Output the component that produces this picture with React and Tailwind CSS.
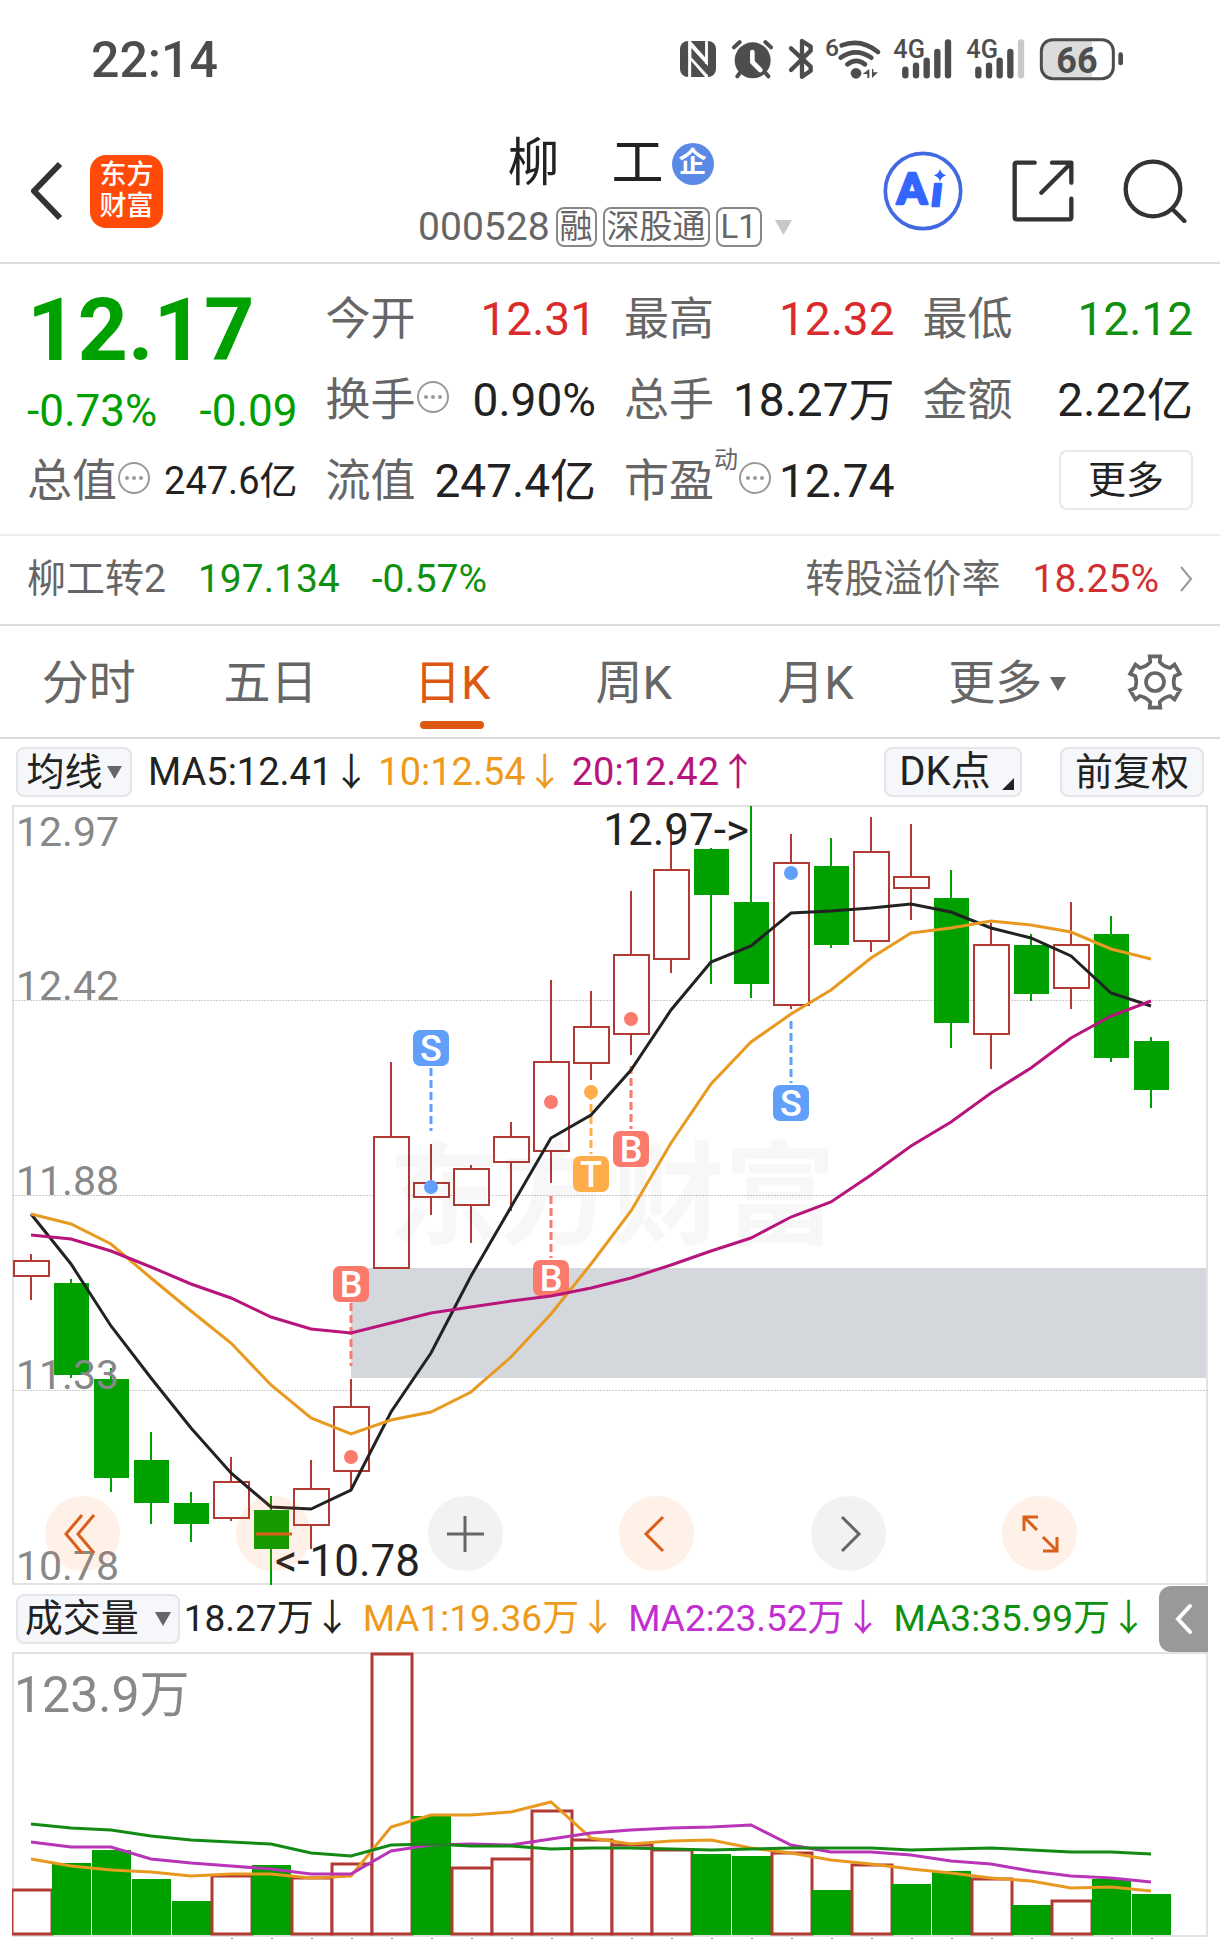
import React from 'react'

const RED = '#b23a35'
const GREEN = '#00a000'

// shared x position of the n-th trading day
const dayX = (i) => 31 + i * 40
const toPoints = (ys) => ys.map((y, i) => `${dayX(i)},${y}`).join(' ')

// [direction, high, bodyTop, bodyBottom, low]
const candles = [
    ['up', 1254, 1261, 1276, 1300],
    ['down', 1279, 1283, 1375, 1378],
    ['down', 1368, 1379, 1478, 1492],
    ['down', 1432, 1460, 1503, 1524],
    ['down', 1492, 1503, 1524, 1542],
    ['up', 1457, 1482, 1518, 1521],
    ['down', 1496, 1510, 1549, 1585],
    ['up', 1460, 1489, 1525, 1549],
    ['up', 1379, 1407, 1471, 1489],
    ['up', 1062, 1137, 1268, 1268],
    ['up', 1144, 1183, 1197, 1215],
    ['up', 1165, 1169, 1205, 1243],
    ['up', 1122, 1137, 1162, 1211],
    ['up', 980, 1062, 1151, 1183],
    ['up', 991, 1027, 1063, 1080],
    ['up', 891, 955, 1034, 1055],
    ['up', 824, 870, 959, 973],
    ['down', 848, 849, 895, 984],
    ['down', 806, 902, 984, 998],
    ['up', 834, 863, 1005, 1009],
    ['down', 838, 866, 945, 948],
    ['up', 817, 852, 941, 952],
    ['up', 824, 877, 888, 920],
    ['down', 870, 898, 1023, 1048],
    ['up', 923, 945, 1034, 1069],
    ['down', 934, 945, 994, 1001],
    ['up', 902, 945, 988, 1009],
    ['down', 916, 934, 1058, 1062],
    ['down', 1037, 1041, 1090, 1108],
]

const ma5 = [1214, 1264, 1326, 1378, 1428, 1473, 1507, 1509, 1490, 1412, 1353, 1276, 1207, 1138, 1115, 1070, 1010, 962, 946, 913, 911, 908, 904, 912, 928, 938, 956, 993, 1006]
const ma10 = [1214, 1224, 1244, 1278, 1311, 1343, 1385, 1418, 1434, 1420, 1412, 1392, 1357, 1314, 1264, 1211, 1143, 1084, 1042, 1014, 990, 958, 933, 928, 921, 925, 932, 949, 959]
const ma20 = [1235, 1239, 1251, 1267, 1284, 1298, 1317, 1329, 1333, 1323, 1313, 1307, 1301, 1296, 1288, 1278, 1265, 1251, 1238, 1217, 1202, 1175, 1146, 1122, 1093, 1068, 1038, 1016, 1001]

const volumeTops = [1890, 1863, 1850, 1879, 1901, 1876, 1865, 1878, 1864, 1654, 1816, 1868, 1859, 1811, 1840, 1845, 1850, 1854, 1856, 1853, 1890, 1865, 1884, 1871, 1879, 1905, 1901, 1879, 1894]
// volume is coloured by the day's change, not by open against close
const volumeDown = [1, 2, 3, 4, 6, 10, 17, 18, 20, 22, 23, 25, 27, 28]
const volMa1 = [1859, 1866, 1870, 1872, 1876, 1874, 1874, 1878, 1876, 1827, 1815, 1815, 1812, 1802, 1838, 1844, 1841, 1840, 1848, 1853, 1860, 1864, 1869, 1873, 1878, 1881, 1888, 1887, 1891]
const volMa2 = [1842, 1847, 1847, 1859, 1863, 1866, 1869, 1874, 1874, 1851, 1845, 1844, 1845, 1839, 1833, 1830, 1828, 1827, 1825, 1845, 1852, 1852, 1855, 1861, 1864, 1871, 1876, 1878, 1882]
const volMa3 = [1824, 1828, 1830, 1836, 1840, 1842, 1844, 1853, 1856, 1845, 1844, 1846, 1846, 1849, 1848, 1848, 1849, 1850, 1849, 1848, 1848, 1848, 1850, 1849, 1848, 1850, 1852, 1852, 1854]

// trade marks: badge top, dashed line from/to, dot on the candle
const marks = [
    { day: 8, label: 'B', color: '#fa7a6b', top: 1266, line: [1303, 1366], dot: 1457 },
    { day: 10, label: 'S', color: '#619ffa', top: 1030, line: [1068, 1131], dot: 1187 },
    { day: 13, label: 'B', color: '#fa7a6b', top: 1260, line: [1196, 1258], dot: 1102 },
    { day: 14, label: 'T', color: '#ffad4a', top: 1156, line: [1092, 1154], dot: 1092 },
    { day: 15, label: 'B', color: '#fa7a6b', top: 1131, line: [1066, 1129], dot: 1019 },
    { day: 19, label: 'S', color: '#619ffa', top: 1085, line: [1021, 1083], dot: 873 },
]

function StatusIcons() {
    return (
        <svg viewBox="0 0 1560 240" className="w-[520px] h-[80px]" fill="#4d4d4d">
            {/* nfc */}
            <rect x="120" y="63" width="108" height="108" rx="24" />
            <path d="M148 171V64l52 58V66M200 64v107l-52-60" fill="none" stroke="#fff" strokeWidth="7" />
            <path d="M146 66l58 62v42L146 106z" fill="#fff" />
            <path d="M154 84l50 54v28L154 112z" />
            <path d="M150 96v74M199 64v68" stroke="#fff" strokeWidth="7" />
            {/* alarm */}
            <circle cx="338" cy="121" r="54" />
            <path d="M282 82l17-16M393 82l-17-16M300 158l-8 11M376 158l9 11" stroke="#4d4d4d" strokeWidth="12" strokeLinecap="round" />
            <path d="M337 96v30l24 24" fill="none" stroke="#fff" strokeWidth="14" strokeLinecap="round" strokeLinejoin="round" />
            {/* bluetooth */}
            <path d="M453 85l59 55v12l-26 18v-48M453 150l59-58V80L486 63v50" fill="none" stroke="#4d4d4d" strokeWidth="13" strokeLinecap="round" strokeLinejoin="round" />
            {/* wifi */}
            <text x="555" y="109" fontSize="74" fontWeight="500">6</text>
            <g fill="none" stroke="#4d4d4d" strokeWidth="14" strokeLinecap="round">
                <path d="M605 76q58-22 109 20M602 113q45-32 92 0M622 133q27-21 53 0" />
            </g>
            <circle cx="648" cy="160" r="16" />
            <path d="M688 147v27h-6v-12h-14zM696 174v-27h4v10h14z" />
            {/* signals */}
            <text x="760" y="114" fontSize="76" fontWeight="500">4G</text>
            <text x="979" y="114" fontSize="76" fontWeight="500">4G</text>
            <g fill="none" stroke="#4d4d4d" strokeWidth="19" strokeLinecap="round">
                <path d="M796 149v17M828 137v29M860 122v44M892 96v70M924 67v99" />
                <path d="M1015 149v17M1047 137v29M1079 122v44M1111 96v70" />
                <path d="M1143 67v99" stroke="#c9c9c9" />
            </g>
            {/* battery */}
            <path d="M1230 60h126v114h-126q-26 0-26-30V90q0-30 26-30z" fill="#dcdcdc" />
            <rect x="1204" y="59" width="216" height="117" rx="34" fill="none" stroke="#4d4d4d" strokeWidth="9" />
            <rect x="1435" y="97" width="14" height="39" rx="7" />
            <text x="1311" y="158" fontSize="108" fontWeight="700" textAnchor="middle">66</text>
        </svg>
    )
}

function GearIcon() {
    // six teeth, each one described by its base and top corners
    const corners = [[-14, -60], [-16, -77], [16, -77], [14, -60]]
    let d = ''
    for (let k = 0; k < 6; k++) {
        const a = (k * Math.PI) / 3
        corners.forEach(([x, y], n) => {
            const px = (x * Math.cos(a) - y * Math.sin(a)).toFixed(1)
            const py = (x * Math.sin(a) + y * Math.cos(a)).toFixed(1)
            if (k === 0 && n === 0) d += `M${px} ${py}`
            else if (n === 0) d += `Q${(53 * Math.sin(a - Math.PI / 6)).toFixed(1)} ${(-53 * Math.cos(a - Math.PI / 6)).toFixed(1)} ${px} ${py}`
            else d += `L${px} ${py}`
        })
    }
    d += 'Q-26.5 -45.9 -14 -60Z'
    return (
        <svg viewBox="-87 -87 174 174" className="w-[58px] h-[58px]" fill="none" stroke="#666" strokeWidth="11">
            <path d={d} />
            <circle r="27" />
        </svg>
    )
}

function More() {
    return (
        <svg viewBox="0 0 34 34" className="w-[34px] h-[34px] shrink-0" fill="#999">
            <circle cx="17" cy="17" r="15" fill="none" stroke="#999" strokeWidth="2" />
            <circle cx="10" cy="17" r="2" />
            <circle cx="17" cy="17" r="2" />
            <circle cx="24" cy="17" r="2" />
        </svg>
    )
}

function Triangle({ className }) {
    return (
        <svg viewBox="0 0 16 14" className={className}>
            <path d="M0 0h16L8 14z" fill="currentColor" />
        </svg>
    )
}

function Stat({ label, sup, info, value, color = 'text-[#222]', size = 'text-[46px]' }) {
    return (
        <div className="flex items-center justify-between h-[81px]">
            <dt className="flex items-center text-[45px] text-[#666]">
                {label}
                {sup && <sup className="self-start text-[24px] leading-[24px] top-0">{sup}</sup>}
                {info && <span className="mb-2"><More /></span>}
            </dt>
            <dd className={`${size} ${color}`}>{value}</dd>
        </div>
    )
}

function Header() {
    return (
        <header className="grid grid-cols-[1fr_auto_1fr] items-center h-[144px] border-b-2 border-[#dcdcdc] pl-[26px] pr-[33px]">
            <div className="flex items-center gap-[26px]">
                <button aria-label="返回">
                    <svg viewBox="0 0 38 62" className="w-[38px] h-[62px]">
                        <path d="M34 4L8 31l26 27" fill="none" stroke="#333" strokeWidth="6" strokeLinejoin="round" />
                    </svg>
                </button>
                <div className="w-[73px] h-[73px] rounded-2xl bg-[#ff4a0a] text-white text-[27px] leading-[31px] font-medium flex flex-col items-center justify-center">
                    <span>东方</span>
                    <span>财富</span>
                </div>
            </div>
            <div className="flex flex-col items-center pt-2">
                <h1 className="flex items-center pl-2 text-[52px] leading-[64px] text-[#222]">
                    柳&#12288;工
                    <span className="ml-2 w-[42px] h-[42px] rounded-full bg-[#5b89e6] text-white text-[28px] leading-[40px] font-bold text-center">企</span>
                </h1>
                <div className="flex items-center gap-[6px] text-[39px] leading-[62px] text-[#666]">
                    <span>000528</span>
                    <span className="border-2 border-[#888] rounded-lg px-[2px] text-[33px] leading-[36px]">融</span>
                    <span className="border-2 border-[#888] rounded-lg px-[2px] text-[33px] leading-[36px]">深股通</span>
                    <span className="border-2 border-[#888] rounded-lg px-[3px] text-[33px] leading-[36px]">L1</span>
                    <Triangle className="w-[23px] h-[15px] ml-1 text-[#c8c8c8]" />
                </div>
            </div>
            <div className="flex items-center justify-end gap-[49px]">
                <button aria-label="Ai">
                    <svg viewBox="0 0 240 240" className="w-[80px] h-[80px]">
                        <circle cx="120" cy="120" r="113" fill="none" stroke="#4169e1" strokeWidth="11" />
                        <g fill="#3366ff" stroke="#3366ff" strokeWidth="8" strokeLinejoin="round" className="font-['Lato',sans-serif] font-black">
                            <text x="42" y="160" fontSize="128">A</text>
                            <text x="146" y="166" fontSize="125" className="italic">ı</text>
                        </g>
                        <path d="M171 54q4 16 19 19-15 4-19 19-4-15-19-19 15-3 19-19z" fill="#3366ff" />
                    </svg>
                </button>
                <button aria-label="分享">
                    <svg viewBox="0 0 186 186" className="w-[62px] h-[62px]" fill="none" stroke="#333" strokeWidth="13" strokeLinecap="round" strokeLinejoin="round">
                        <path d="M68 8H14q-6 0-6 6v158q0 6 6 6h158q6 0 6-6v-56" />
                        <path d="M120 8h58v60M175 11L88 98" />
                    </svg>
                </button>
                <button aria-label="搜索">
                    <svg viewBox="0 0 192 192" className="w-[64px] h-[64px]" fill="none" stroke="#333" strokeWidth="13" strokeLinecap="round">
                        <circle cx="90" cy="90" r="82" />
                        <path d="M148 150l36 36" />
                    </svg>
                </button>
            </div>
        </header>
    )
}

function Quote() {
    return (
        <section className="px-[27px] pt-[15px] pb-[12px] border-b-2 border-[#eee]">
            <div className="grid grid-cols-4 gap-x-7">
                <div className="row-span-2 whitespace-nowrap text-[#00a000]">
                    <div className="pt-1 text-[88px] leading-[94px] font-bold">12.17</div>
                    <div className="flex justify-between pt-1 text-[44px] leading-[60px]">
                        <span>-0.73%</span>
                        <span>-0.09</span>
                    </div>
                </div>
                <Stat label="今开" value="12.31" color="text-[#d92b2b]" />
                <Stat label="最高" value="12.32" color="text-[#d92b2b]" />
                <Stat label="最低" value="12.12" color="text-[#109010]" />
                <Stat label="换手" info value="0.90%" />
                <Stat label="总手" value="18.27万" />
                <Stat label="金额" value="2.22亿" />
                <Stat label="总值" info value="247.6亿" size="text-[38px]" />
                <Stat label="流值" value="247.4亿" />
                <Stat label="市盈" sup="动" info value="12.74" />
                <div className="flex items-center justify-end pb-1">
                    <button className="w-[134px] h-[60px] rounded-lg border-2 border-[#e8e8e8] text-[38px] leading-[50px] text-[#222]">更多</button>
                </div>
            </div>
        </section>
    )
}

function Bond() {
    return (
        <a href="#bond" className="flex items-center h-[90px] px-[27px] pb-[2px] border-b-2 border-[#dcdcdc] text-[39px]">
            <span className="text-[#666]">柳工转2</span>
            <span className="ml-8 text-[#109010]">197.134</span>
            <span className="ml-8 text-[#109010]">-0.57%</span>
            <span className="ml-auto text-[#666]">转股溢价率</span>
            <span className="ml-8 text-[#d03030]">18.25%</span>
            <svg viewBox="0 0 14 28" className="w-[14px] h-[28px] ml-5">
                <path d="M2 2l10 12L2 26" fill="none" stroke="#999" strokeWidth="2" />
            </svg>
        </a>
    )
}

function Tabs() {
    const tabs = ['分时', '五日', '日K', '周K', '月K']
    return (
        <nav className="flex items-center h-[113px] border-b-2 border-[#dcdcdc] text-[47px] text-[#666]">
            <div className="grid grid-cols-6 flex-1 h-full">
                {tabs.map((tab) => (
                    <button key={tab} className={tab === '日K' ? 'relative pt-1 pr-1 text-[#dd5810]' : 'relative pt-1 pr-1'}>
                        {tab}
                        {tab === '日K' && <span className="absolute bottom-[8px] left-1/2 -ml-[34px] w-16 h-2 rounded-full bg-[#dd5810]" />}
                    </button>
                ))}
                <button className="flex items-center justify-center gap-2 pl-4 pt-1">
                    更多
                    <Triangle className="w-[16px] h-[14px]" />
                </button>
            </div>
            <button aria-label="设置" className="w-[130px] flex justify-center">
                <GearIcon />
            </button>
        </nav>
    )
}

function Mark({ day, label, color, top, line, dot }) {
    const x = dayX(day)
    return (
        <g>
            <line x1={x} x2={x} y1={line[0]} y2={line[1]} stroke={color} strokeWidth="3" strokeDasharray="8 4" />
            <circle cx={x} cy={dot} r="7" fill={color} />
            <rect x={x - 18} y={top} width="36" height="36" rx="7" fill={color} />
            <text x={x} y={top + 31} textAnchor="middle" fontSize="36" fontWeight="500" fill="#fff">{label}</text>
        </g>
    )
}

function RoundButton({ label, muted, children }) {
    return (
        <button
            aria-label={label}
            className={`w-[75px] h-[75px] rounded-full ${muted ? 'bg-black/5 text-[#666]' : 'bg-[#ff5a00]/9 text-[#d9601a]'}`}
        >
            <svg viewBox="0 0 75 75" className="w-full h-full" fill="none" stroke="currentColor" strokeWidth="3">
                {children}
            </svg>
        </button>
    )
}

function PriceChart() {
    return (
        <div className="relative mx-[12px]">
            <svg viewBox="12 805 1196 780" className="block w-full">
                <rect x="351" y="1268" width="856" height="110" fill="#d4d7dc" />
                <rect x="13" y="806" width="1194" height="778" fill="none" stroke="#e2e2e2" strokeWidth="2" />
                {[1000, 1195, 1390].map((y) => (
                    <line key={y} x1="12" x2="1208" y1={y + 0.5} y2={y + 0.5} stroke="#ccc" strokeDasharray="2 1" />
                ))}
                {candles.map(([dir, high, top, bottom, low], i) => {
                    const x = dayX(i)
                    return dir === 'up' ? (
                        <g key={i} stroke={RED} strokeWidth="2" fill="#fff">
                            <path d={`M${x} ${high}V${top}M${x} ${bottom}V${low}`} />
                            <rect x={x - 17} y={top} width="35" height={bottom - top} />
                        </g>
                    ) : (
                        <g key={i} fill={GREEN}>
                            <rect x={x - 1} y={high} width="2" height={low - high} />
                            <rect x={x - 17} y={top} width="35" height={bottom - top} />
                        </g>
                    )
                })}
                <text x="388" y="1236" fontSize="112" fontWeight="700" fill="#000" fillOpacity="0.03">东方财富</text>
                {marks.map((m) => <Mark key={m.day} {...m} />)}
                <g fill="none" strokeWidth="3">
                    <polyline points={toPoints(ma5)} stroke="#222" />
                    <polyline points={toPoints(ma10)} stroke="#e89a20" />
                    <polyline points={toPoints(ma20)} stroke="#b8157c" />
                </g>
                <g fontSize="41" fill="#888">
                    <text x="16" y="846">12.97</text>
                    <text x="16" y="1000">12.42</text>
                    <text x="16" y="1195">11.88</text>
                    <text x="16" y="1389">11.33</text>
                    <text x="16" y="1580">10.78</text>
                </g>
                <g fontSize="44" fill="#222">
                    <text x="749" y="845" textAnchor="end">12.97-&gt;</text>
                    <text x="275" y="1576">&lt;-10.78</text>
                </g>
            </svg>
            <div className="absolute left-[33px] right-[131px] bottom-[14px] flex justify-between">
                <RoundButton label="最早"><path d="M37 19L21 38l16 19M49 19L33 38l16 19" /></RoundButton>
                <RoundButton label="缩小"><path d="M20 38h36" /></RoundButton>
                <RoundButton label="放大" muted><path d="M19 38h37M37 20v36" /></RoundButton>
                <RoundButton label="前移"><path d="M44 21L27 38l17 17" /></RoundButton>
                <RoundButton label="后移" muted><path d="M31 21l17 17-17 17" /></RoundButton>
                <RoundButton label="全屏"><path d="M36 21H22v14M22 21l13 13M55 41v14H41M55 55L41 41" /></RoundButton>
            </div>
        </div>
    )
}

function VolumeChart() {
    return (
        <div className="mx-[12px]">
            <svg viewBox="12 1652 1196 287" className="block w-full">
                <rect x="13" y="1653" width="1194" height="283" fill="none" stroke="#e2e2e2" strokeWidth="2" />
                {volumeTops.map((top, i) => {
                    const x = dayX(i) - 19
                    return volumeDown.includes(i) ? (
                        <rect key={i} x={x} y={top} width="39" height={1935 - top} fill={GREEN} />
                    ) : (
                        <rect key={i} x={x} y={top} width="40" height={1934 - top} fill="#fff" stroke={RED} strokeWidth="3" />
                    )
                })}
                {candles.slice(5).map((c, i) => (
                    <rect key={i} x={dayX(i + 5)} y="1938" width="2" height="1" fill="#888" />
                ))}
                <g fill="none" strokeWidth="3">
                    <polyline points={toPoints(volMa1)} stroke="#e89a20" />
                    <polyline points={toPoints(volMa2)} stroke="#b835b8" />
                    <polyline points={toPoints(volMa3)} stroke="#148a14" />
                </g>
                <text x="14" y="1712" fontSize="50" fill="#888">123.9万</text>
            </svg>
        </div>
    )
}

export default function App() {
    return (
        <main className="min-h-screen overflow-hidden bg-white whitespace-nowrap font-['Roboto','Noto_Sans_CJK_SC',sans-serif]">
            <div className="flex items-center justify-between h-[120px] pl-[91px] pr-[60px] text-[#4d4d4d]">
                <span className="text-[50px] font-medium">22:14</span>
                <StatusIcons />
            </div>
            <Header />
            <Quote />
            <Bond />
            <Tabs />
            <div className="flex items-center h-[66px] px-4 text-[38px] gap-2">
                <button className="flex items-center justify-center gap-1 w-[116px] h-[50px] rounded-lg border-2 border-[#e3e5e8] bg-[#f5f7fa] text-[#222]">
                    均线
                    <Triangle className="w-[15px] h-[13px] text-[#666]" />
                </button>
                <span className="ml-2 text-[#222]">MA5:12.41↓</span>
                <span className="text-[#ee9a1c]">10:12.54↓</span>
                <span className="text-[#b8157c]">20:12.42↑</span>
                <button className="relative ml-auto w-[138px] h-[50px] rounded-lg border-2 border-[#e3e5e8] bg-[#f5f7fa] text-[40px] text-[#222] pr-4 flex items-center justify-center">
                    DK点
                    <svg viewBox="0 0 12 12" className="absolute right-[6px] bottom-[5px] w-[12px] h-[12px]">
                        <path d="M12 0v12H0z" fill="#222" />
                    </svg>
                </button>
                <button className="ml-[30px] w-[144px] h-[50px] rounded-lg border-2 border-[#e3e5e8] bg-[#f5f7fa] text-[#222] flex items-center justify-center">前复权</button>
            </div>
            <PriceChart />
            <div className="flex items-center h-[67px] pl-4 pr-[12px] text-[37px] gap-3">
                <button className="flex items-center justify-center gap-4 w-[164px] h-[50px] rounded-lg border-2 border-[#e3e5e8] bg-[#f5f7fa] text-[38px] text-[#222]">
                    成交量
                    <Triangle className="w-[16px] h-[14px] text-[#666]" />
                </button>
                <span className="-ml-2 text-[#222]">18.27万↓</span>
                <span className="text-[#ee9a1c]">MA1:19.36万↓</span>
                <span className="text-[#c22fd0]">MA2:23.52万↓</span>
                <span className="text-[#109010]">MA3:35.99万↓</span>
                <button aria-label="展开" className="ml-auto w-[49px] h-[66px] rounded-l-xl bg-[#999] flex items-center justify-center">
                    <svg viewBox="0 0 20 32" className="w-[20px] h-[32px]">
                        <path d="M16 3L4 16l12 13" fill="none" stroke="#fff" strokeWidth="4" strokeLinecap="round" />
                    </svg>
                </button>
            </div>
            <VolumeChart />
        </main>
    )
}
